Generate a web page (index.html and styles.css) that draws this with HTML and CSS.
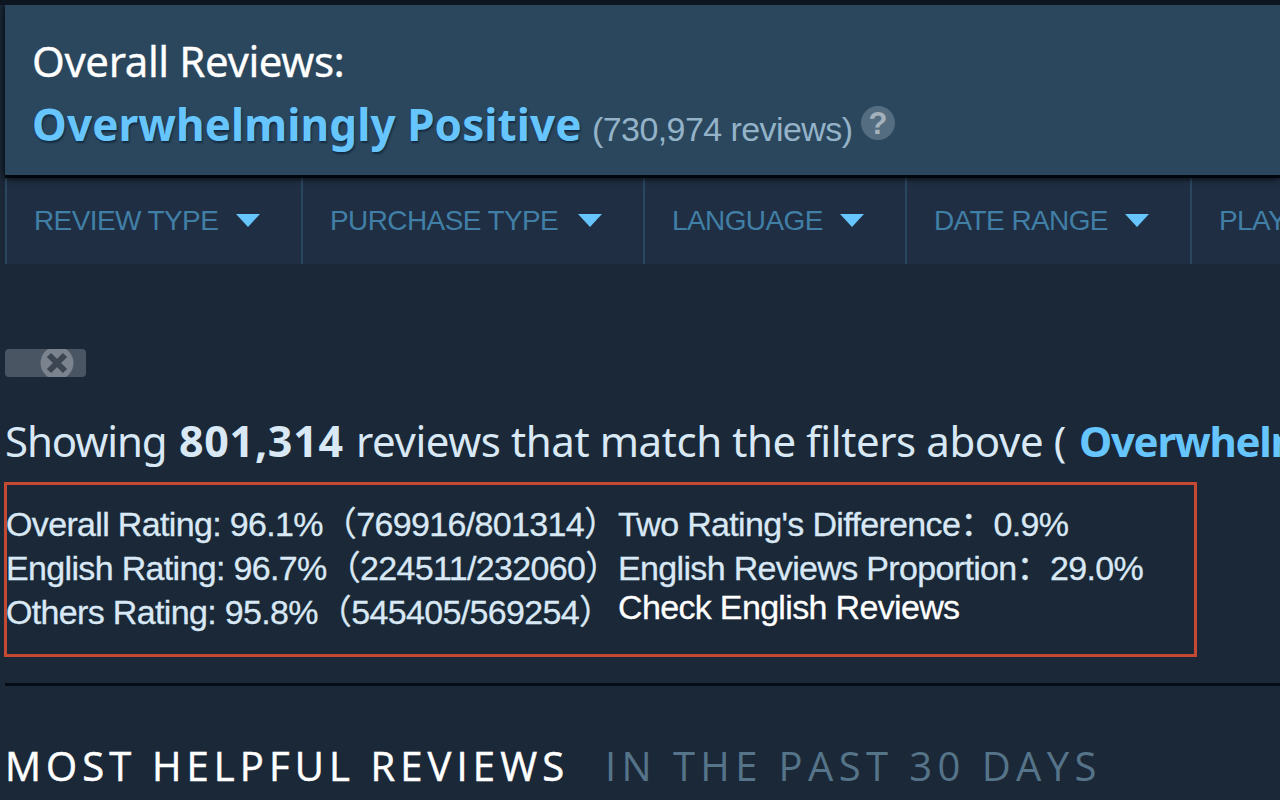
FILE: index.html
```
<!doctype html>
<html lang="en">

<head>
<meta charset="utf-8">
<title>Customer Reviews</title>

<link rel="stylesheet" href="styles.css">

</head>

<body>

<div id="container">

  <div class="summary">
    <div class="summary-title">Overall Reviews:</div>
    <div class="summary-score">
      <span class="score">Overwhelmingly Positive</span>
      <span class="count">(730,974 reviews)</span>
      <span class="help">?</span>
    </div>
  </div>

  <div class="filters">
    <div class="filter review-type"><span>REVIEW TYPE</span><i class="arrow"></i></div>
    <div class="filter purchase-type"><span>PURCHASE TYPE</span><i class="arrow"></i></div>
    <div class="filter language"><span>LANGUAGE</span><i class="arrow"></i></div>
    <div class="filter date-range"><span>DATE RANGE</span><i class="arrow"></i></div>
    <div class="filter playtime"><span>PLAYTIME</span><i class="arrow"></i></div>
  </div>

  <div class="active-filter">
    <svg width="34" height="28" viewBox="0 0 34 28">
      <circle cx="17" cy="14" r="16.5" fill="#7b838e"/>
      <path d="M9 6l16 16M25 6l-16 16" stroke="#3c4652" stroke-width="6"/>
    </svg>
  </div>

  <div class="showing">
    <span class="showing-label">Showing</span>
    <b class="showing-total">801,314</b>
    <span class="showing-text">reviews that match the filters above (</span>
    <b class="showing-score">Overwhelmingly Positive</b>
  </div>

  <div class="ratings">
    <div class="ratings-left">
      <p>Overall Rating: 96.1%（769916/801314）</p>
      <p>English Rating: 96.7%（224511/232060）</p>
      <p>Others Rating: 95.8%（545405/569254）</p>
    </div>
    <div class="ratings-right">
      <p>Two Rating's Difference：0.9%</p>
      <p>English Reviews Proportion：29.0%</p>
      <a class="check">Check English Reviews</a>
    </div>
  </div>

  <div class="headings">
    <span class="helpful">MOST HELPFUL REVIEWS</span>
    <span class="period">IN THE PAST 30 DAYS</span>
  </div>

</div>

</body>

</html>
```
FILE: styles.css
```
* {
  box-sizing: border-box;
}

body {
  background-color: #1b2838;
  color: #d9e8f5;
  font-family: "Liberation Sans", "Noto Sans CJK SC", sans-serif;
  margin: 0;
  overflow: hidden;
}

#container {
  border-top: 5px solid #0d1521;
  height: 800px;
  overflow: hidden;
  padding-left: 5px;
  white-space: nowrap;
}

.summary {
  background-color: #2a475e;
  border-bottom: 3px solid #02060d;
  box-shadow: 0 0 7px #000;
  height: 173px;
  padding: 24px 0 0 27px;
  position: relative;
}

.summary-title {
  color: #fff;
  font-family: "Noto Sans", sans-serif;
  font-size: 42px;
  height: 64px;
  letter-spacing: -0.4px;
  line-height: 63px;
  -webkit-text-stroke: 0.3px;
}

.summary-score {
  align-items: baseline;
  display: flex;
  height: 62px;
  line-height: 62px;
}

.score {
  color: #67c5fd;
  font-family: "Noto Sans", sans-serif;
  font-size: 44px;
  font-weight: bold;
  letter-spacing: 0.1px;
  text-shadow: 1px 2px 2px #142b40;
  width: 560px;
}

.count {
  color: #94b3c8;
  font-size: 34px;
  letter-spacing: -0.58px;
  width: 269px;
}

.help {
  align-self: center;
  background-color: #546d80;
  border-radius: 50%;
  color: #a3b1bc;
  font-size: 31px;
  font-weight: bold;
  height: 34px;
  line-height: 35px;
  margin-bottom: 2px;
  text-align: center;
  width: 34px;
}

.filters {
  background-color: #1f2e42;
  color: #417fa6;
  display: flex;
  font-size: 28px;
  height: 86px;
  letter-spacing: -0.6px;
}

.filter {
  border-left: 2px solid #2a475e;
  display: flex;
  flex: none;
  justify-content: space-between;
  line-height: 86px;
  padding: 0 41px 0 27px;
}

.review-type {
  width: 296px;
}
.purchase-type {
  width: 342px;
}
.language {
  width: 262px;
}
.date-range {
  width: 285px;
}
.playtime {
  width: 296px;
}

.arrow {
  border-left: 12px solid transparent;
  border-right: 12px solid transparent;
  border-top: 13px solid #67c5fd;
  height: 0;
  margin-top: 36px;
}

.active-filter {
  background-color: #4a5563;
  border-radius: 4px;
  display: flex;
  height: 28px;
  justify-content: flex-end;
  margin-top: 85px;
  padding-right: 12px;
  width: 81px;
}

.showing {
  align-items: baseline;
  display: flex;
  font-family: "Noto Sans", sans-serif;
  font-size: 42px;
  height: 105px;
  line-height: 128px;
}

.showing-label {
  flex: none;
  letter-spacing: -1.1px;
  width: 174px;
}
.showing-total {
  flex: none;
  font-size: 43px;
  letter-spacing: 0.7px;
  width: 177px;
}
.showing-text {
  flex: none;
  letter-spacing: -0.42px;
  width: 723px;
}
.showing-score {
  color: #67c5fd;
  letter-spacing: -1.3px;
}

.ratings {
  border: 3px solid #c34932;
  display: flex;
  font-size: 34px;
  height: 175px;
  letter-spacing: -0.66px;
  line-height: 44px;
  margin-left: -1px;
  padding-top: 17px;
  width: 1193px;
  -webkit-text-stroke: 0.3px;
}

.ratings p {
  height: 44px;
  margin: 0;
}

.ratings-left {
  margin-left: -1px;
  width: 612px;
}

.check {
  color: #fff;
  display: block;
  line-height: 35px;
}

.headings {
  border-top: 3px solid #060c16;
  display: flex;
  font-family: "Open Sans", sans-serif;
  font-size: 40px;
  line-height: 60px;
  margin-top: 26px;
  padding-top: 50px;
}

.helpful {
  color: #fff;
  letter-spacing: 5.1px;
  width: 600px;
  -webkit-text-stroke: 0.5px;
}

.period {
  color: #567489;
  letter-spacing: 5.4px;
}
```
